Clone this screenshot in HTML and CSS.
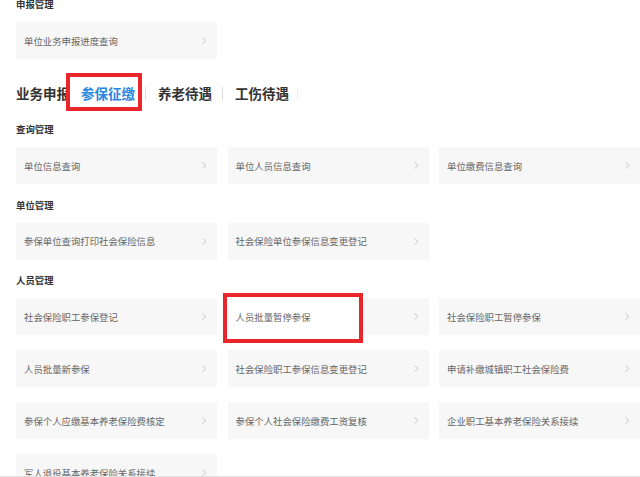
FILE: index.html
```html
<!DOCTYPE html>
<html lang="zh-CN">
<head>
<meta charset="utf-8">
<title>业务申报</title>
<link rel="stylesheet" href="styles.css">
</head>
<body>
<div class="viewport">
  <div class="page">
    <section class="section">
      <h3 class="section-title">申报管理</h3>
      <div class="grid">
        <a class="card"><span class="card-text">单位业务申报进度查询</span><svg class="chev" width="5" height="7" viewBox="0 0 5 7"><polyline points="0.5,0.5 4,3.5 0.5,6.5"/></svg></a>
      </div>
    </section>

    <nav class="tabs">
      <span class="tabs-label">业务申报</span>
      <span class="tab tab-active">参保征缴</span>
      <span class="tab-sep"></span>
      <span class="tab">养老待遇</span>
      <span class="tab-sep"></span>
      <span class="tab">工伤待遇</span>
      <span class="tab-sep tab-sep-faint"></span>
    </nav>

    <section class="section">
      <h3 class="section-title">查询管理</h3>
      <div class="grid">
        <a class="card"><span class="card-text">单位信息查询</span><svg class="chev" width="5" height="7" viewBox="0 0 5 7"><polyline points="0.5,0.5 4,3.5 0.5,6.5"/></svg></a>
        <a class="card"><span class="card-text">单位人员信息查询</span><svg class="chev" width="5" height="7" viewBox="0 0 5 7"><polyline points="0.5,0.5 4,3.5 0.5,6.5"/></svg></a>
        <a class="card"><span class="card-text">单位缴费信息查询</span><svg class="chev" width="5" height="7" viewBox="0 0 5 7"><polyline points="0.5,0.5 4,3.5 0.5,6.5"/></svg></a>
      </div>
    </section>

    <section class="section">
      <h3 class="section-title">单位管理</h3>
      <div class="grid">
        <a class="card"><span class="card-text">参保单位查询打印社会保险信息</span><svg class="chev" width="5" height="7" viewBox="0 0 5 7"><polyline points="0.5,0.5 4,3.5 0.5,6.5"/></svg></a>
        <a class="card"><span class="card-text">社会保险单位参保信息变更登记</span><svg class="chev" width="5" height="7" viewBox="0 0 5 7"><polyline points="0.5,0.5 4,3.5 0.5,6.5"/></svg></a>
      </div>
    </section>

    <section class="section section-people">
      <h3 class="section-title">人员管理</h3>
      <div class="grid">
        <a class="card"><span class="card-text">社会保险职工参保登记</span><svg class="chev" width="5" height="7" viewBox="0 0 5 7"><polyline points="0.5,0.5 4,3.5 0.5,6.5"/></svg></a>
        <a class="card card-marked"><span class="card-text">人员批量暂停参保</span><svg class="chev" width="5" height="7" viewBox="0 0 5 7"><polyline points="0.5,0.5 4,3.5 0.5,6.5"/></svg></a>
        <a class="card"><span class="card-text">社会保险职工暂停参保</span><svg class="chev" width="5" height="7" viewBox="0 0 5 7"><polyline points="0.5,0.5 4,3.5 0.5,6.5"/></svg></a>
        <a class="card"><span class="card-text">人员批量新参保</span><svg class="chev" width="5" height="7" viewBox="0 0 5 7"><polyline points="0.5,0.5 4,3.5 0.5,6.5"/></svg></a>
        <a class="card"><span class="card-text">社会保险职工参保信息变更登记</span><svg class="chev" width="5" height="7" viewBox="0 0 5 7"><polyline points="0.5,0.5 4,3.5 0.5,6.5"/></svg></a>
        <a class="card"><span class="card-text">申请补缴城镇职工社会保险费</span><svg class="chev" width="5" height="7" viewBox="0 0 5 7"><polyline points="0.5,0.5 4,3.5 0.5,6.5"/></svg></a>
        <a class="card"><span class="card-text">参保个人应缴基本养老保险费核定</span><svg class="chev" width="5" height="7" viewBox="0 0 5 7"><polyline points="0.5,0.5 4,3.5 0.5,6.5"/></svg></a>
        <a class="card"><span class="card-text">参保个人社会保险缴费工资复核</span><svg class="chev" width="5" height="7" viewBox="0 0 5 7"><polyline points="0.5,0.5 4,3.5 0.5,6.5"/></svg></a>
        <a class="card"><span class="card-text">企业职工基本养老保险关系接续</span><svg class="chev" width="5" height="7" viewBox="0 0 5 7"><polyline points="0.5,0.5 4,3.5 0.5,6.5"/></svg></a>
        <a class="card"><span class="card-text">军人退役基本养老保险关系接续</span><svg class="chev" width="5" height="7" viewBox="0 0 5 7"><polyline points="0.5,0.5 4,3.5 0.5,6.5"/></svg></a>
      </div>
    </section>
  </div>
</div>
</body>
</html>
```

FILE: styles.css
```css
*, *::before, *::after { box-sizing: border-box; }

html, body {
  margin: 0;
  padding: 0;
  background: #ffffff;
}

body {
  font-family: "Noto Sans CJK SC", "Noto Sans", "Liberation Sans", sans-serif;
  color: #333333;
}

.viewport {
  height: 477px;
  overflow: hidden;
  border-bottom: 1px solid #e2e2e2;
}

.page {
  margin-top: -5px;
  padding-left: 16px;
}

.section {
  margin-bottom: 11.5px;
}

.section-title {
  margin: 0 0 9px 0;
  height: 18px;
  line-height: 18px;
  font-size: 9.4px;
  font-weight: 700;
  color: #333333;
}

.grid {
  display: grid;
  grid-template-columns: repeat(3, 201px);
  column-gap: 10.5px;
  row-gap: 15px;
}

.card {
  position: relative;
  height: 37px;
  background: #f7f7f7;
  display: flex;
  align-items: center;
  justify-content: space-between;
  padding: 0 10px 0 8px;
  font-size: 9.4px;
  color: #666666;
  text-decoration: none;
}

.card-text {
  position: relative;
  z-index: 1;
  white-space: nowrap;
}

.chev {
  position: relative;
  z-index: 1;
  display: block;
}

.chev polyline {
  fill: none;
  stroke: #c4c4c4;
  stroke-width: 0.9;
}

.card-marked::before {
  content: "";
  position: absolute;
  left: -5px;
  top: -5px;
  width: 140px;
  height: 50px;
  border: 4px solid #e8262c;
  background: #ffffff;
  z-index: 0;
}

.tabs {
  display: flex;
  align-items: center;
  height: 20px;
  margin-top: 24px;
  margin-bottom: 17px;
  font-size: 13.5px;
  font-weight: 700;
  line-height: 20px;
}

.tabs-label {
  color: #333333;
  margin-right: 11px;
  white-space: nowrap;
}

.tab {
  position: relative;
  z-index: 0;
  color: #333333;
  white-space: nowrap;
}

.tab-active {
  color: #2a86e0;
}

.tab-active::before {
  content: "";
  position: absolute;
  left: -15px;
  right: -6.5px;
  top: -10.5px;
  bottom: -8px;
  border: 4px solid #e8262c;
  background: #ffffff;
  z-index: -1;
}

.tab-sep {
  width: 1px;
  height: 13px;
  background: #dddddd;
  margin: 0 12px 0 10px;
}

.tab-sep-faint {
  background: #eeeeee;
  margin-left: 8px;
}
```
